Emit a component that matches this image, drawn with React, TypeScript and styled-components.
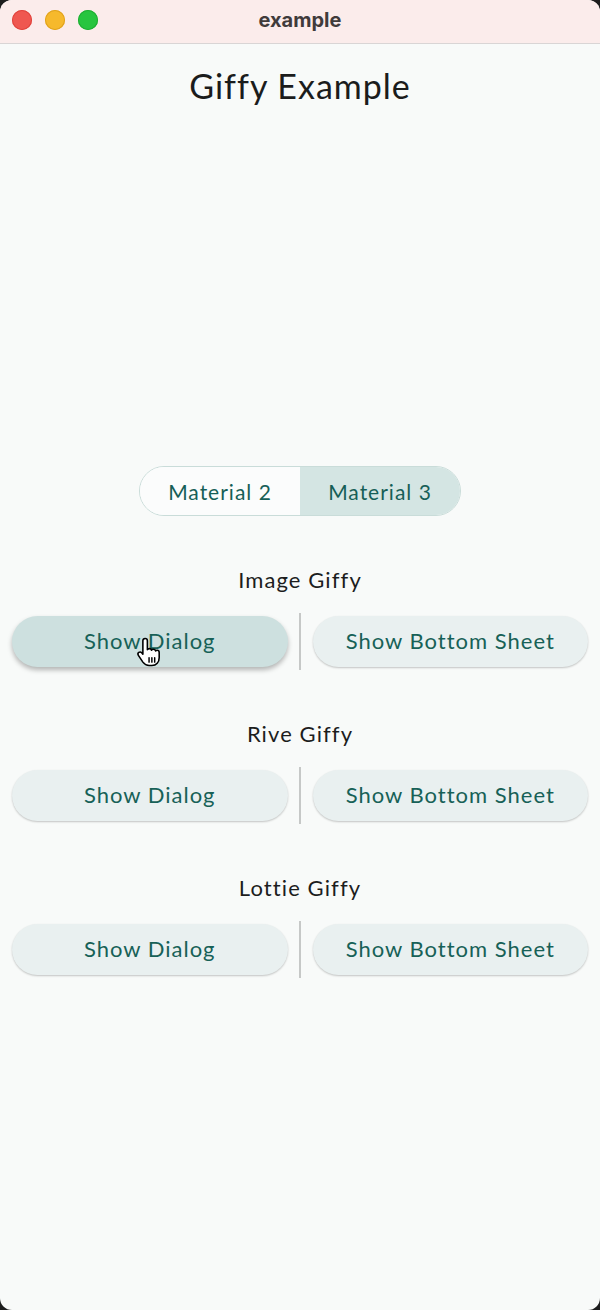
import styled, { createGlobalStyle } from 'styled-components';

const GlobalStyle = createGlobalStyle`
  html, body {
    margin: 0;
    padding: 0;
    background: #1d1d1d;
  }
  * {
    box-sizing: border-box;
  }
`;

const Window = styled.div`
  position: relative;
  width: 600px;
  height: 1310px;
  border-radius: 12px;
  overflow: hidden;
  background: #f8faf9;
  display: flex;
  flex-direction: column;
  font-family: Lato, 'Open Sans', sans-serif;
`;

const TitleBar = styled.div`
  height: 44px;
  flex-shrink: 0;
  background: #fbeceb;
  border-bottom: 1px solid #d9d5d5;
  display: grid;
  grid-template-columns: 1fr auto 1fr;
  align-items: center;
  padding: 0 12px;
`;

const Lights = styled.div`
  display: flex;
  gap: 13px;
  padding-bottom: 3px;
`;

const Light = styled.span<{ $color: string; $edge: string }>`
  width: 20px;
  height: 20px;
  border-radius: 50%;
  background: ${p => p.$color};
  box-shadow: inset 0 0 0 1px ${p => p.$edge};
`;

const WindowTitle = styled.div`
  font-family: Inter, 'Liberation Sans', sans-serif;
  font-weight: 700;
  font-size: 20px;
  color: #403b3b;
  padding-bottom: 4px;
`;

const Content = styled.div`
  display: flex;
  flex-direction: column;
  align-items: center;
  padding-top: 22px;
`;

const PageTitle = styled.h1`
  margin: 0;
  font-weight: 400;
  font-size: 34px;
  line-height: 40px;
  letter-spacing: 1px;
  color: #1b1c1c;
`;

const Segmented = styled.div`
  margin-top: 360px;
  width: 322px;
  height: 50px;
  border: 1px solid #c9dcd9;
  border-radius: 25px;
  overflow: hidden;
  display: grid;
  grid-template-columns: 1fr 1fr;
`;

const Segment = styled.div<{ $active?: boolean }>`
  display: flex;
  align-items: center;
  justify-content: center;
  font-size: 21px;
  letter-spacing: 1px;
  color: #165f57;
  background: ${p => (p.$active ? '#d4e5e3' : '#fbfcfc')};
`;

const Section = styled.section`
  width: 100%;
  margin-top: 50px;
  display: flex;
  flex-direction: column;
  align-items: center;
  gap: 19px;
`;

const SectionLabel = styled.div`
  font-size: 22px;
  line-height: 28px;
  letter-spacing: 1.1px;
  color: #1c1d1d;
`;

const ButtonRow = styled.div`
  width: 100%;
  height: 57px;
  padding: 0 12px;
  display: grid;
  grid-template-columns: 1fr 2px 1fr;
  gap: 11.5px;
  align-items: center;
`;

const Divider = styled.div`
  align-self: stretch;
  background: #c6c8c7;
`;

const PillButton = styled.button<{ $pressed?: boolean }>`
  position: relative;
  height: 51px;
  padding: 0 0 2px;
  border: none;
  border-radius: 26px;
  font-family: inherit;
  font-size: 22px;
  letter-spacing: 1px;
  color: #176157;
  background: ${p => (p.$pressed ? '#cde0df' : '#e9f0f0')};
  box-shadow: ${p =>
    p.$pressed
      ? '0 3px 5px rgba(0, 0, 0, 0.28)'
      : '0 1px 2px rgba(0, 0, 0, 0.22)'};
  cursor: pointer;
`;

const Pointer = styled.svg`
  position: absolute;
  left: 123px;
  top: 20px;
  width: 27px;
  height: 32px;
  pointer-events: none;
`;

function HandCursor() {
  return (
    <Pointer viewBox='0 0 24 28'>
      <path
        d='M9 2C10.1 2 11 2.9 11 4V12C11.3 11.4 12 11 12.8 11C13.8 11 14.5 11.6 14.7 12.4C15 11.9 15.6 11.5 16.4 11.5C17.4 11.5 18.1 12.2 18.3 13C18.6 12.7 19.1 12.5 19.6 12.5C20.7 12.5 21.5 13.3 21.5 14.4V19C21.5 23 19 26 15 26H12.5C10 26 8.5 25 7 23L3 17C2.4 16.1 2.6 15 3.4 14.4C4.2 13.8 5.3 14 6 14.7L7 16V4C7 2.9 7.9 2 9 2Z'
        fill='#fff'
        stroke='#000'
        strokeWidth='1.4'
        strokeLinejoin='round'
      />
      <path
        d='M12.5 19V23M15 19V23M17.5 19V23'
        stroke='#000'
        strokeWidth='1.3'
        strokeLinecap='round'
      />
    </Pointer>
  );
}

const sections = ['Image Giffy', 'Rive Giffy', 'Lottie Giffy'];

export default function App() {
  return (
    <>
      <GlobalStyle />
      <Window>
        <TitleBar>
          <Lights>
            <Light $color='#ef5750' $edge='#e0443d' />
            <Light $color='#f6b92c' $edge='#e0a21d' />
            <Light $color='#27c53f' $edge='#1fae33' />
          </Lights>
          <WindowTitle>example</WindowTitle>
          <div />
        </TitleBar>
        <Content>
          <PageTitle>Giffy Example</PageTitle>
          <Segmented>
            <Segment>Material 2</Segment>
            <Segment $active>Material 3</Segment>
          </Segmented>
          {sections.map((label, i) => (
            <Section key={label}>
              <SectionLabel>{label}</SectionLabel>
              <ButtonRow>
                <PillButton type='button' $pressed={i === 0}>
                  Show Dialog
                  {i === 0 && <HandCursor />}
                </PillButton>
                <Divider />
                <PillButton type='button'>Show Bottom Sheet</PillButton>
              </ButtonRow>
            </Section>
          ))}
        </Content>
      </Window>
    </>
  );
}
